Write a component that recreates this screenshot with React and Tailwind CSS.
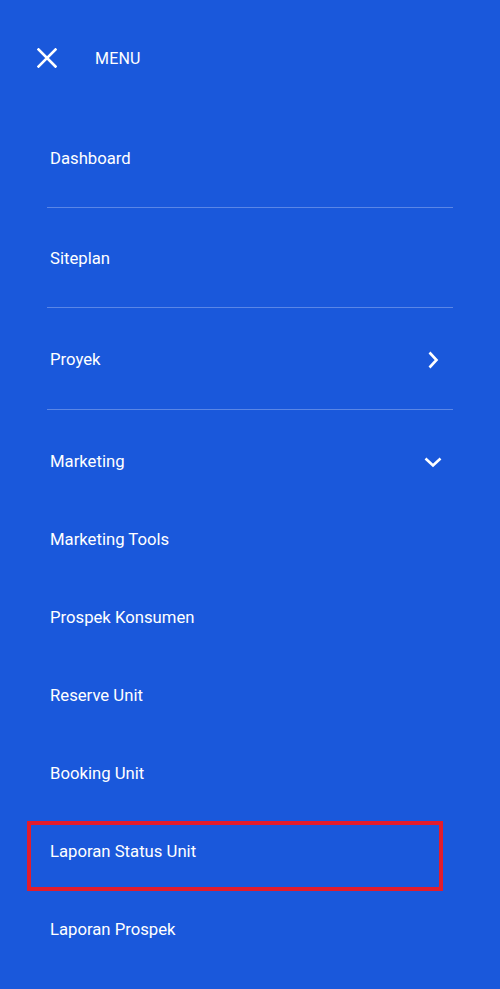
export default function App() {
  const sub = ["Marketing Tools", "Prospek Konsumen", "Reserve Unit", "Booking Unit", "Laporan Status Unit", "Laporan Prospek"];
  return (
    <div className="w-[500px] h-[989px] bg-[#1a58db] text-white overflow-hidden" style={{ fontFamily: "Roboto, 'Noto Sans', sans-serif" }}>
      <div className="flex items-center h-[20px] mt-[48px] mb-[40px] pl-[37px]">
        <svg width="20" height="20" viewBox="0 0 20 20" className="shrink-0">
          <path d="M1.5 1.5 L18.5 18.5 M18.5 1.5 L1.5 18.5" stroke="white" strokeWidth="2.6" strokeLinecap="square" fill="none" />
        </svg>
        <span className="ml-[38px] text-[16px] leading-[20px] tracking-[0.2px] relative top-[1px]">MENU</span>
      </div>
      <div className="mx-[47px]">
        <div className="h-[100px] flex items-center pl-[3px] pt-[2px] border-b border-[#5a86e6] text-[16.7px]">Dashboard</div>
        <div className="h-[100px] flex items-center pl-[3px] pt-[2px] border-b border-[#5a86e6] text-[16.7px]">Siteplan</div>
        <div className="h-[102px] flex items-center justify-between pl-[3px] pr-[14px] pt-[2px] border-b border-[#5a86e6] text-[16.7px]">
          <span>Proyek</span>
          <svg width="12" height="18" viewBox="0 0 12 18">
            <path d="M2.5 1.5 L9.5 9 L2.5 16.5" stroke="white" strokeWidth="2.6" fill="none" />
          </svg>
        </div>
        <div className="h-[91px] flex items-start justify-between pt-[41px] pl-[3px] pr-[11px] text-[16.7px] leading-[22px]">
          <span>Marketing</span>
          <svg width="18" height="12" viewBox="0 0 18 12" className="mt-[5px]">
            <path d="M1.5 2.5 L9 9.5 L16.5 2.5" stroke="white" strokeWidth="2.6" fill="none" />
          </svg>
        </div>
        {sub.map((s) => (
          <div key={s} className="relative h-[78px] flex items-center pl-[3px] text-[16.7px]">
            <span>{s}</span>
            {s === "Laporan Status Unit" && (
              <div className="absolute left-[-20px] top-[8px] w-[416px] h-[70px] border-4 border-[#e31c2c]" />
            )}
          </div>
        ))}
      </div>
    </div>
  );
}
